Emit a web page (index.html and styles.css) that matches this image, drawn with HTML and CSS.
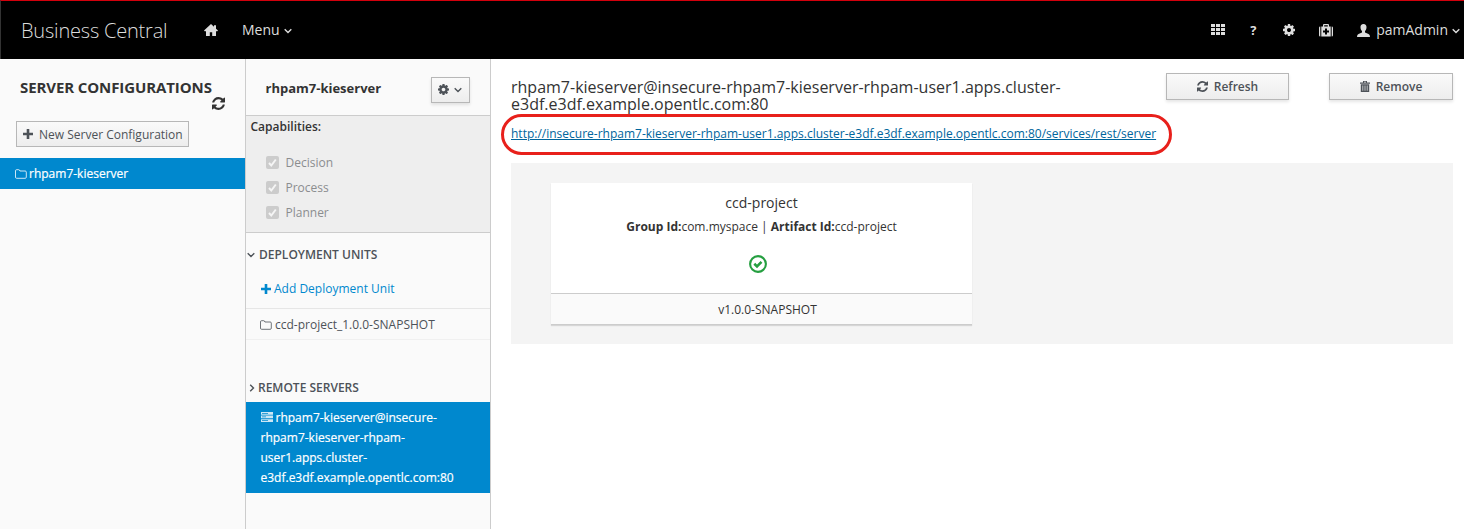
FILE: index.html
```html
<!DOCTYPE html>
<html lang="en">
<head>
<meta charset="utf-8">
<title>Business Central</title>
<link rel="stylesheet" href="styles.css">
</head>
<body>
<svg class="defs" aria-hidden="true">
  <symbol id="refresh" viewBox="0 128 1536 1536"><path d="M1511 1056q0 5-1 7-64 268-268 434.500t-478 166.500q-146 0-282.500-55t-243.500-157l-129 129q-19 19-45 19t-45-19-19-45v-448q0-26 19-45t45-19h448q26 0 45 19t19 45-19 45l-137 137q71 66 161 102t187 36q134 0 250-65t186-179q11-17 53-117 8-23 30-23h192q13 0 22.500 9.500t9.500 22.500zm25-800v448q0 26-19 45t-45 19h-448q-26 0-45-19t-19-45 19-45l138-138q-148-137-349-137-134 0-250 65t-186 179q-11 17-53 117-8 23-30 23h-199q-13 0-22.500-9.500t-9.500-22.500v-7q65-268 270-434.500t480-166.500q146 0 284 55.500t245 156.500l130-129q19-19 45-19t45 19 19 45z"/></symbol>
  <symbol id="cog" viewBox="0 128 1536 1536"><path d="M1024 896q0-106-75-181t-181-75-181 75-75 181 75 181 181 75 181-75 75-181zm512-109v222q0 12-8 23t-20 13l-185 28q-19 54-39 91 35 50 107 138 10 12 10 25t-9 23q-27 37-99 108t-94 71q-12 0-26-9l-138-108q-44 23-91 38-16 136-29 186-7 28-36 28h-222q-14 0-24.500-8.500t-11.500-21.500l-28-184q-49-16-90-37l-141 107q-10 9-25 9-14 0-25-11-126-114-165-168-7-10-7-23 0-12 8-23 15-21 51-66.500t54-70.500q-27-50-41-99l-183-27q-13-2-21-12.500t-8-23.500v-222q0-12 8-23t19-13l186-28q14-46 39-92-40-57-107-138-10-12-10-24 0-10 9-23 26-36 98.500-107.500t94.500-71.500q13 0 26 10l138 107q44-23 91-38 16-136 29-186 7-28 36-28h222q14 0 24.500 8.500t11.500 21.500l28 184q49 16 90 37l142-107q9-9 24-9 13 0 25 10 129 119 165 170 7 8 7 22 0 12-8 23-15 21-51 66.500t-54 70.500q26 50 41 98l183 28q13 2 21 12.500t8 23.500z"/></symbol>
  <symbol id="down" viewBox="0 0 8 6"><path d="M.7 1.200 4 4.500 7.300 1.200" fill="none" stroke="currentColor" stroke-width="1.400"/></symbol>
  <symbol id="folder" viewBox="0 0 12 10"><path d="M.5 8.200V1.800Q.5.700 1.600.7H3.700Q4.700.7 4.900 2H10.200Q11.300 2 11.300 3.100V8.200Q11.300 9.300 10.200 9.300H1.600Q.5 9.300.5 8.200Z" fill="none" stroke="currentColor" stroke-width=".8"/></symbol>
  <symbol id="plus" viewBox="0 0 10 10"><path d="M3.700 0h2.600v3.700H10v2.600H6.300V10H3.700V6.300H0V3.700h3.700z"/></symbol>
</svg>

<header class="masthead">
  <span class="brand">Business Central</span>
  <svg class="home" viewBox="0 0 14 12"><path d="M7 0 10 2.800V1.200h2V4.700L14 6.600 13.300 7.300H12V12H8.200V8.200H5.800V12H2V7.300H.7L0 6.600Z"/></svg>
  <span class="menu">Menu</span><svg class="caret"><use href="#down"/></svg>
  <nav class="tools">
    <svg class="apps" viewBox="0 0 14 11"><path d="M0 0h4v3H0zm5 0h4v3H5zm5 0h4v3h-4zM0 4h4v3H0zm5 0h4v3H5zm5 0h4v3h-4zM0 8h4v3H0zm5 0h4v3H5zm5 0h4v3h-4z"/></svg>
    <span class="help">?</span>
    <svg class="settings"><use href="#cog"/></svg>
    <svg class="medkit" viewBox="0 0 14 13"><path fill-rule="evenodd" d="M1.300 2.500V12.500Q0 12.500 0 11.300V3.700Q0 2.500 1.300 2.500ZM12.700 2.500V12.500Q14 12.500 14 11.300V3.700Q14 2.500 12.700 2.500ZM2.300 2.500H4V1Q4 0 5 0H9Q10 0 10 1V2.500H11.700V12.500H2.300ZM5.200 1.200V2.500H8.800V1.200ZM6 4.500V6.500H4V8.500H6V10.500H8V8.500H10V6.500H8V4.500Z"/></svg>
    <svg class="user" viewBox="0 0 13 13"><path d="M6.500 0C8.500 0 9.700 1.500 9.500 3.500 9.400 5.300 8.700 6.300 8 7.100V8.500L11.500 10Q13 10.700 13 13H0Q0 10.700 1.500 10L5 8.500V7.100C4.300 6.300 3.600 5.300 3.500 3.500 3.300 1.500 4.500 0 6.500 0Z"/></svg>
    <span class="username">pamAdmin</span><svg class="caret"><use href="#down"/></svg>
  </nav>
</header>

<main class="columns">
  <aside class="configs">
    <h1>SERVER CONFIGURATIONS</h1>
    <svg class="reload"><use href="#refresh"/></svg>
    <button class="btn new"><svg class="plus"><use href="#plus"/></svg><span>New Server Configuration</span></button>
    <div class="config-item"><svg class="folder"><use href="#folder"/></svg><span>rhpam7-kieserver</span></div>
  </aside>

  <aside class="details">
    <div class="details-head">
      <strong>rhpam7-kieserver</strong>
      <button class="btn gear"><svg class="cog"><use href="#cog"/></svg><svg class="caret"><use href="#down"/></svg></button>
    </div>
    <section class="capabilities">
      <h2>Capabilities:</h2>
      <ul>
        <li><svg class="check" viewBox="0 0 13 13"><rect width="13" height="13" rx="2"/><path d="M3 7 5.300 9.500 9.800 3.500"/></svg>Decision</li>
        <li><svg class="check" viewBox="0 0 13 13"><rect width="13" height="13" rx="2"/><path d="M3 7 5.300 9.500 9.800 3.500"/></svg>Process</li>
        <li><svg class="check" viewBox="0 0 13 13"><rect width="13" height="13" rx="2"/><path d="M3 7 5.300 9.500 9.800 3.500"/></svg>Planner</li>
      </ul>
    </section>
    <h3 class="units"><svg class="caret"><use href="#down"/></svg><span>DEPLOYMENT UNITS</span></h3>
    <div class="add"><svg class="plus"><use href="#plus"/></svg><span>Add Deployment Unit</span></div>
    <div class="unit"><svg class="folder"><use href="#folder"/></svg><span>ccd-project_1.0.0-SNAPSHOT</span></div>
    <h3 class="remote"><svg class="caret side"><use href="#down"/></svg><span>REMOTE SERVERS</span></h3>
    <div class="server"><svg class="rack" viewBox="0 0 12 10"><path fill-rule="evenodd" d="M0 0h12v2.700H0zM0 3.600h12v2.700H0zM0 7.200h12v2.700H0zM1 1v.7h6V1zM1 4.600v.7h4v-.7zM1 8.200v.7h6v-.7z"/></svg><span>rhpam7-kieserver@insecure-</span><br><span>rhpam7-kieserver-rhpam-</span><br><span>user1.apps.cluster-</span><br><span>e3df.e3df.example.opentlc.com:80</span></div>
  </aside>

  <section class="content">
    <div class="top">
      <h2 class="title">rhpam7-kieserver@insecure-rhpam7-kieserver-rhpam-user1.apps.cluster-<br>e3df.e3df.example.opentlc.com:80</h2>
      <div class="actions">
        <button class="btn action"><svg class="refresh"><use href="#refresh"/></svg><span>Refresh</span></button>
        <button class="btn action remove"><svg class="trash" viewBox="0 0 10 11"><path fill-rule="evenodd" d="M3 1.500V0H7V1.500H10V2.700H0V1.500ZM4 .8V1.500H6V.8ZM.8 3.200H9.200V11H.8ZM2.500 4.500V9.700H3.200V4.500ZM4.650 4.500V9.700H5.350V4.500ZM6.800 4.500V9.700H7.500V4.500Z"/></svg><span>Remove</span></button>
      </div>
    </div>
    <div class="highlight"><a>http://insecure-rhpam7-kieserver-rhpam-user1.apps.cluster-e3df.e3df.example.opentlc.com:80/services/rest/server</a></div>
    <div class="canvas">
      <article class="card">
        <h4>ccd-project</h4>
        <p><b>Group Id:</b>com.myspace | <b>Artifact Id:</b>ccd-project</p>
        <svg class="ok" viewBox="0 0 18 18"><circle cx="9" cy="9" r="7.900"/><path d="M5.300 8.800 8 11.400 12.500 6.900"/></svg>
        <footer>v1.0.0-SNAPSHOT</footer>
      </article>
    </div>
  </section>
</main>
</body>
</html>
```
FILE: styles.css
```css
* { box-sizing: border-box; }
body { margin: 0; height: 529px; overflow: hidden; background: #fff; color: #333; font: 12px/20px "Open Sans", sans-serif; display: flex; flex-direction: column; }
svg { display: block; flex: none; fill: currentColor; }
h1, h2, h3, h4, p, ul { margin: 0; padding: 0; }
span, a, strong { white-space: nowrap; }
.defs { display: none; }
.caret { width: 8px; height: 6px; }

.masthead { height: 59px; flex: none; display: flex; align-items: center; background: #000; border-top: 1px solid #d2000c; border-left: 1px solid #333; color: #ddd; font-size: 14px; padding: 0 5px 1px 20px; }
.brand { width: 183px; font-size: 20px; font-weight: 300; letter-spacing: -.2px; line-height: 28px; padding-top: 2px; }
.home { width: 14px; height: 12px; margin: 1px 24px 0 0; }
.menu { margin-right: 4px; }
.masthead .caret { margin-top: 3px; }
.tools { margin-left: auto; display: flex; align-items: center; }
.apps { width: 14px; height: 11px; margin-right: 1px; }
.help { width: 8px; margin-left: 24px; font-weight: 700; font-size: 13px; }
.settings { width: 12px; height: 12px; margin: 1px 0 0 25px; }
.medkit { width: 14px; height: 13px; margin: 1px 0 0 24px; }
.user { width: 13px; height: 13px; margin: 2px 0 0 24px; }
.username { margin: 0 4px 0 6px; }
.tools { margin-right: -1px; }

.columns { flex: 1; min-height: 0; display: grid; grid-template-columns: 246px 245px 1fr; }
.configs, .details { background: #fafafa; border-right: 1px solid #ccc; }

.btn { display: flex; align-items: center; border: 1px solid #b7b7b7; background: linear-gradient(#fafafa, #ededed); color: #4d5258; font: 12px/20px "Open Sans", sans-serif; padding: 0; box-shadow: 0 2px 3px rgba(3, 3, 3, .1); }
.plus { width: 10px; height: 10px; }
.folder { width: 12px; height: 10px; }

.configs { display: flex; flex-direction: column; }
.configs h1 { font-size: 15px; font-weight: 700; letter-spacing: -.1px; line-height: 20px; margin: 18px 0 0 20px; }
.reload { width: 13px; height: 13px; margin: 0 0 0 212px; }
.new { width: 173px; height: 26px; margin: 11px 0 0 16px; padding-left: 6px; gap: 6px; box-shadow: none; }
.new span { padding-top: 1px; }
.config-item { height: 31px; margin-top: 11px; padding-left: 15px; display: flex; align-items: center; gap: 2px; background: #0088ce; color: #fff; -webkit-text-stroke: .2px #fff; }

.details { display: flex; flex-direction: column; }
.details-head { height: 57px; flex: none; border-bottom: 1px solid #ccc; display: flex; align-items: center; justify-content: space-between; padding: 5px 20px 0 19.500px; }
.details-head strong { font-size: 13px; font-weight: 700; padding-bottom: 3px; }
.gear { width: 39px; height: 26px; padding-left: 6px; gap: 5px; }
.cog { width: 11px; height: 11px; }
.capabilities { height: 117px; flex: none; background: #eee; border-bottom: 1px solid #ccc; padding: 1px 0 0 4.500px; }
.capabilities h2 { font-size: 12px; font-weight: 600; line-height: 20px; margin-bottom: 13px; }
.capabilities ul { list-style: none; padding-left: 15.500px; }
.capabilities li { height: 25px; display: flex; align-items: center; gap: 6.500px; color: #8b8d8f; }
.check { width: 13px; height: 13px; }
.check rect { fill: #ccc; }
.check path { fill: none; stroke: #f5f5f5; stroke-width: 2; }
.details h3 { display: flex; align-items: center; font-size: 12px; font-weight: 600; line-height: 20px; color: #4d5258; }
.units { margin-top: 12px; padding-left: 1px; gap: 4px; }
.add { display: flex; align-items: center; height: 44px; flex: none; gap: 3px; padding: 4px 0 0 15px; margin-bottom: -1px; color: #0088ce; }
.unit { height: 32px; flex: none; display: flex; align-items: center; gap: 3px; padding: 1px 0 0 14px; border-top: 1px solid #e6e6e6; border-bottom: 1px solid #f0f0f0; color: #4d5258; }
.remote { margin-top: 38px; padding-left: 2px; gap: 2px; }
.side { transform: rotate(-90deg); }
.server { height: 91px; flex: none; margin-top: 4px; padding: 6px 0 0 14.500px; background: #0088ce; color: #fff; -webkit-text-stroke: .2px #fff; }
.rack { display: inline-block; width: 12px; height: 10px; margin-right: 3px; opacity: .8; }

.content { padding: 14px 11px 0 20px; }
.top { display: flex; justify-content: space-between; height: 41px; }
.title { font-size: 16px; font-weight: 400; line-height: 17px; padding-top: 6px; }
.actions { display: flex; gap: 40px; }
.action { justify-content: center; width: 123px; height: 27px; gap: 6px; font-weight: 600; }
.remove { width: 124px; }
.refresh { width: 11px; height: 11px; }
.trash { width: 10px; height: 11px; }
.highlight { width: 671px; height: 41px; margin-left: -10px; padding: 7px 0 0 7px; border: 3px solid #e8201b; border-radius: 21px; }
.highlight a { color: #00659c; text-decoration: underline; }
.canvas { height: 181px; margin-top: 8px; padding: 20px 0 0 40px; background: #f4f4f4; }
.card { width: 421px; height: 142px; background: #fff; display: flex; flex-direction: column; align-items: center; box-shadow: 0 1px 1px rgba(3, 3, 3, .12); }
.card h4 { font-size: 14px; font-weight: 400; line-height: 20px; margin-top: 10px; }
.card p { line-height: 20px; margin-top: 4px; }
.ok { width: 18px; height: 18px; margin: 18px 7px 0 0; }
.ok circle { fill: none; stroke: #259f40; stroke-width: 2.100; }
.ok path { fill: none; stroke: #259f40; stroke-width: 2.600; }
.card footer { width: 100%; margin-top: auto; height: 32px; padding: 6px 0 0 12px; text-align: center; background: #fafafa; border-top: 1px solid #ccc; border-bottom: 1px solid #ccc; }
```
